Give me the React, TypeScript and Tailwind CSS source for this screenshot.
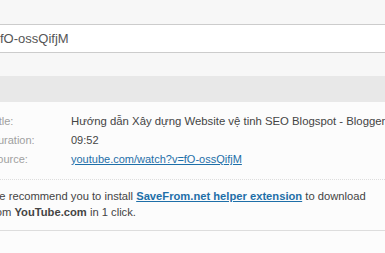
export default function App() {
  return (
    <div className="w-[385px] h-[253px] overflow-hidden bg-[#fcfcfc] font-['Liberation_Sans',Arial,sans-serif]">
      <div className="h-[24px] bg-[#f7f7f7]" />
      <div className="h-[29px] bg-white border-y border-[#cccccc] flex items-center text-[13px] text-[#555555] whitespace-nowrap">
        fO-ossQifjM
      </div>
      <div className="h-[23px] bg-[#f7f7f7]" />
      <div className="h-[26px] bg-[#e8e8e8]" />

      <div className="-ml-[10px] w-[395px]">
        <div className="pt-[10px] pb-[10px] text-[11px] leading-[19px]">
          <div className="flex whitespace-nowrap">
            <div className="w-[81px] shrink-0 text-[#a0a0a0]">Title:</div>
            <div className="text-[#444444] text-[11.35px] overflow-hidden">
              Hướng dẫn Xây dựng Website vệ tinh SEO Blogspot - Blogger SEO
            </div>
          </div>
          <div className="flex whitespace-nowrap">
            <div className="w-[81px] shrink-0 text-[#a0a0a0]">Duration:</div>
            <div className="text-[#444444]">09:52</div>
          </div>
          <div className="flex whitespace-nowrap">
            <div className="w-[81px] shrink-0 text-[#a0a0a0]">Source:</div>
            <a href="#" className="text-[#1e6fa8] underline">youtube.com/watch?v=fO-ossQifjM</a>
          </div>
        </div>

        <div className="-ml-[1px] border-t border-dotted border-[#dddddd] pt-[8px] pb-[10px] text-[11.2px] leading-[16px] text-[#444444] whitespace-nowrap">
          We recommend you to install{' '}
          <a href="#" className="font-bold text-[#1e6fa8] underline">SaveFrom.net helper extension</a> to download
          <br />
          from <b>YouTube.com</b> in 1 click.
        </div>
      </div>
      <div className="border-t border-[#dddddd]" />
    </div>
  );
}
